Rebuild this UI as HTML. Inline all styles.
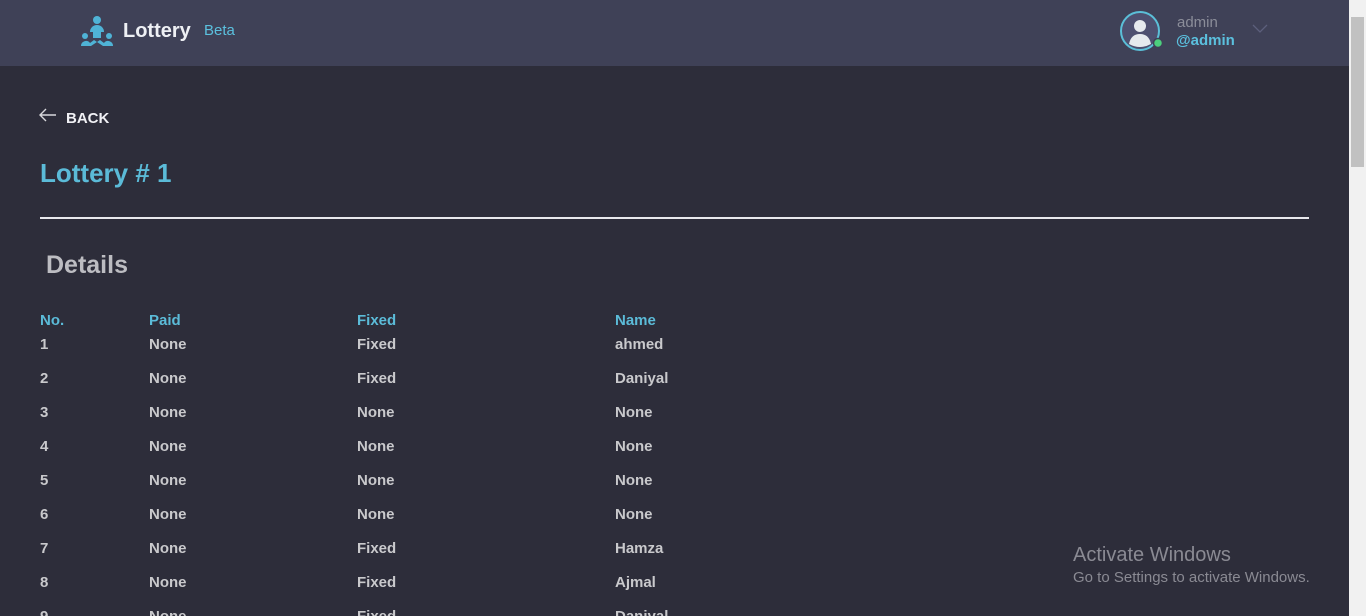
<!DOCTYPE html>
<html style="overflow:hidden"><head><style>
html,body{margin:0;width:1366px;height:616px;overflow:hidden}
body{background:#2d2d3a;font-family:"Liberation Sans",sans-serif;position:relative}
.hdr{position:absolute;left:0;top:0;width:1349px;height:66px;background:#3f4157}
.sb{position:absolute;right:0;top:0;width:17px;height:616px;background:#f1f1f1}
.thumb{position:absolute;right:2px;top:17px;width:13px;height:150px;background:#c1c1c1}
.t{position:absolute;white-space:nowrap}
.row{position:absolute;left:40px;font-weight:bold;font-size:15px;color:#c9c9cc}
.row span{position:absolute;top:0}
</style></head><body>
<div class="hdr">
<svg style="position:absolute;left:80px;top:15px" width="34" height="32" viewBox="0 0 34 32">
<circle cx="17" cy="5" r="4" fill="#4fb3d6"/>
<path d="M10 17a7 7 0 0 1 14 0z" fill="#4fb3d6"/>
<rect x="13" y="16" width="8" height="7" fill="#4fb3d6"/>
<circle cx="5" cy="21" r="3" fill="#4fb3d6"/><circle cx="29" cy="21" r="3" fill="#4fb3d6"/>
<path d="M1 31a5 5 0 0 1 9-3l4-3 3 2-6 4z" fill="#4fb3d6"/><path d="M33 31a5 5 0 0 0-9-3l-4-3-3 2 6 4z" fill="#4fb3d6"/>
</svg>
<div class="t" style="left:123px;top:20px;font-size:20px;font-weight:bold;color:#eef0f4">Lottery</div>
<div class="t" style="left:204px;top:22px;font-size:15px;color:#5bc0de">Beta</div>
<svg style="position:absolute;left:1120px;top:11px" width="42" height="40" viewBox="0 0 42 40">
<circle cx="20" cy="20" r="19" fill="#4e5070" stroke="#5bbfd8" stroke-width="2"/>
<circle cx="20" cy="15" r="6" fill="#e6eaee"/>
<path d="M9 33q2-10 11-10t11 10q-11 6-22 0z" fill="#e6eaee"/>
<circle cx="38" cy="32" r="4.5" fill="#4cd07d" stroke="#3f4157" stroke-width="1.5"/>
</svg>
<div class="t" style="left:1177px;top:14px;font-size:15px;color:#8b8d99">admin</div>
<div class="t" style="left:1176px;top:32px;font-size:15px;font-weight:bold;color:#5bc0de">@admin</div>
<svg style="position:absolute;left:1252px;top:24px" width="16" height="10"><path d="M1 1l7 7 7-7" stroke="#5c5f7c" fill="none" stroke-width="1.3"/></svg>
</div>
<div class="sb"><div class="thumb"></div></div>
<svg style="position:absolute;left:39px;top:108px" width="18" height="14"><path d="M17 7H2M7 1L1 7l6 6" stroke="#d8d8dc" fill="none" stroke-width="1.4"/></svg>
<div class="t" style="left:66px;top:110px;font-size:15px;font-weight:bold;color:#f0f0f4">BACK</div>
<div class="t" style="left:40px;top:158px;font-size:26px;font-weight:bold;color:#5bbbd8">Lottery # 1</div>
<div style="position:absolute;left:40px;top:217px;width:1269px;height:2px;background:#e8e8ec"></div>
<div class="t" style="left:46px;top:251px;font-size:25px;font-weight:bold;color:#bdbdc2">Details</div>
<div class="row" style="top:312px;color:#5bbbd8"><span style="left:0">No.</span><span style="left:109px">Paid</span><span style="left:317px">Fixed</span><span style="left:575px">Name</span></div>
<div class="row" style="top:336px"><span style="left:0">1</span><span style="left:109px">None</span><span style="left:317px">Fixed</span><span style="left:575px">ahmed</span></div>
<div class="row" style="top:370px"><span style="left:0">2</span><span style="left:109px">None</span><span style="left:317px">Fixed</span><span style="left:575px">Daniyal</span></div>
<div class="row" style="top:404px"><span style="left:0">3</span><span style="left:109px">None</span><span style="left:317px">None</span><span style="left:575px">None</span></div>
<div class="row" style="top:438px"><span style="left:0">4</span><span style="left:109px">None</span><span style="left:317px">None</span><span style="left:575px">None</span></div>
<div class="row" style="top:472px"><span style="left:0">5</span><span style="left:109px">None</span><span style="left:317px">None</span><span style="left:575px">None</span></div>
<div class="row" style="top:506px"><span style="left:0">6</span><span style="left:109px">None</span><span style="left:317px">None</span><span style="left:575px">None</span></div>
<div class="row" style="top:540px"><span style="left:0">7</span><span style="left:109px">None</span><span style="left:317px">Fixed</span><span style="left:575px">Hamza</span></div>
<div class="row" style="top:574px"><span style="left:0">8</span><span style="left:109px">None</span><span style="left:317px">Fixed</span><span style="left:575px">Ajmal</span></div>
<div class="row" style="top:608px"><span style="left:0">9</span><span style="left:109px">None</span><span style="left:317px">Fixed</span><span style="left:575px">Daniyal</span></div>
<div class="t" style="left:1073px;top:544px;font-size:20px;color:#8a8a93">Activate Windows</div>
<div class="t" style="left:1073px;top:569px;font-size:15px;color:#8a8a93">Go to Settings to activate Windows.</div>
</body></html>
